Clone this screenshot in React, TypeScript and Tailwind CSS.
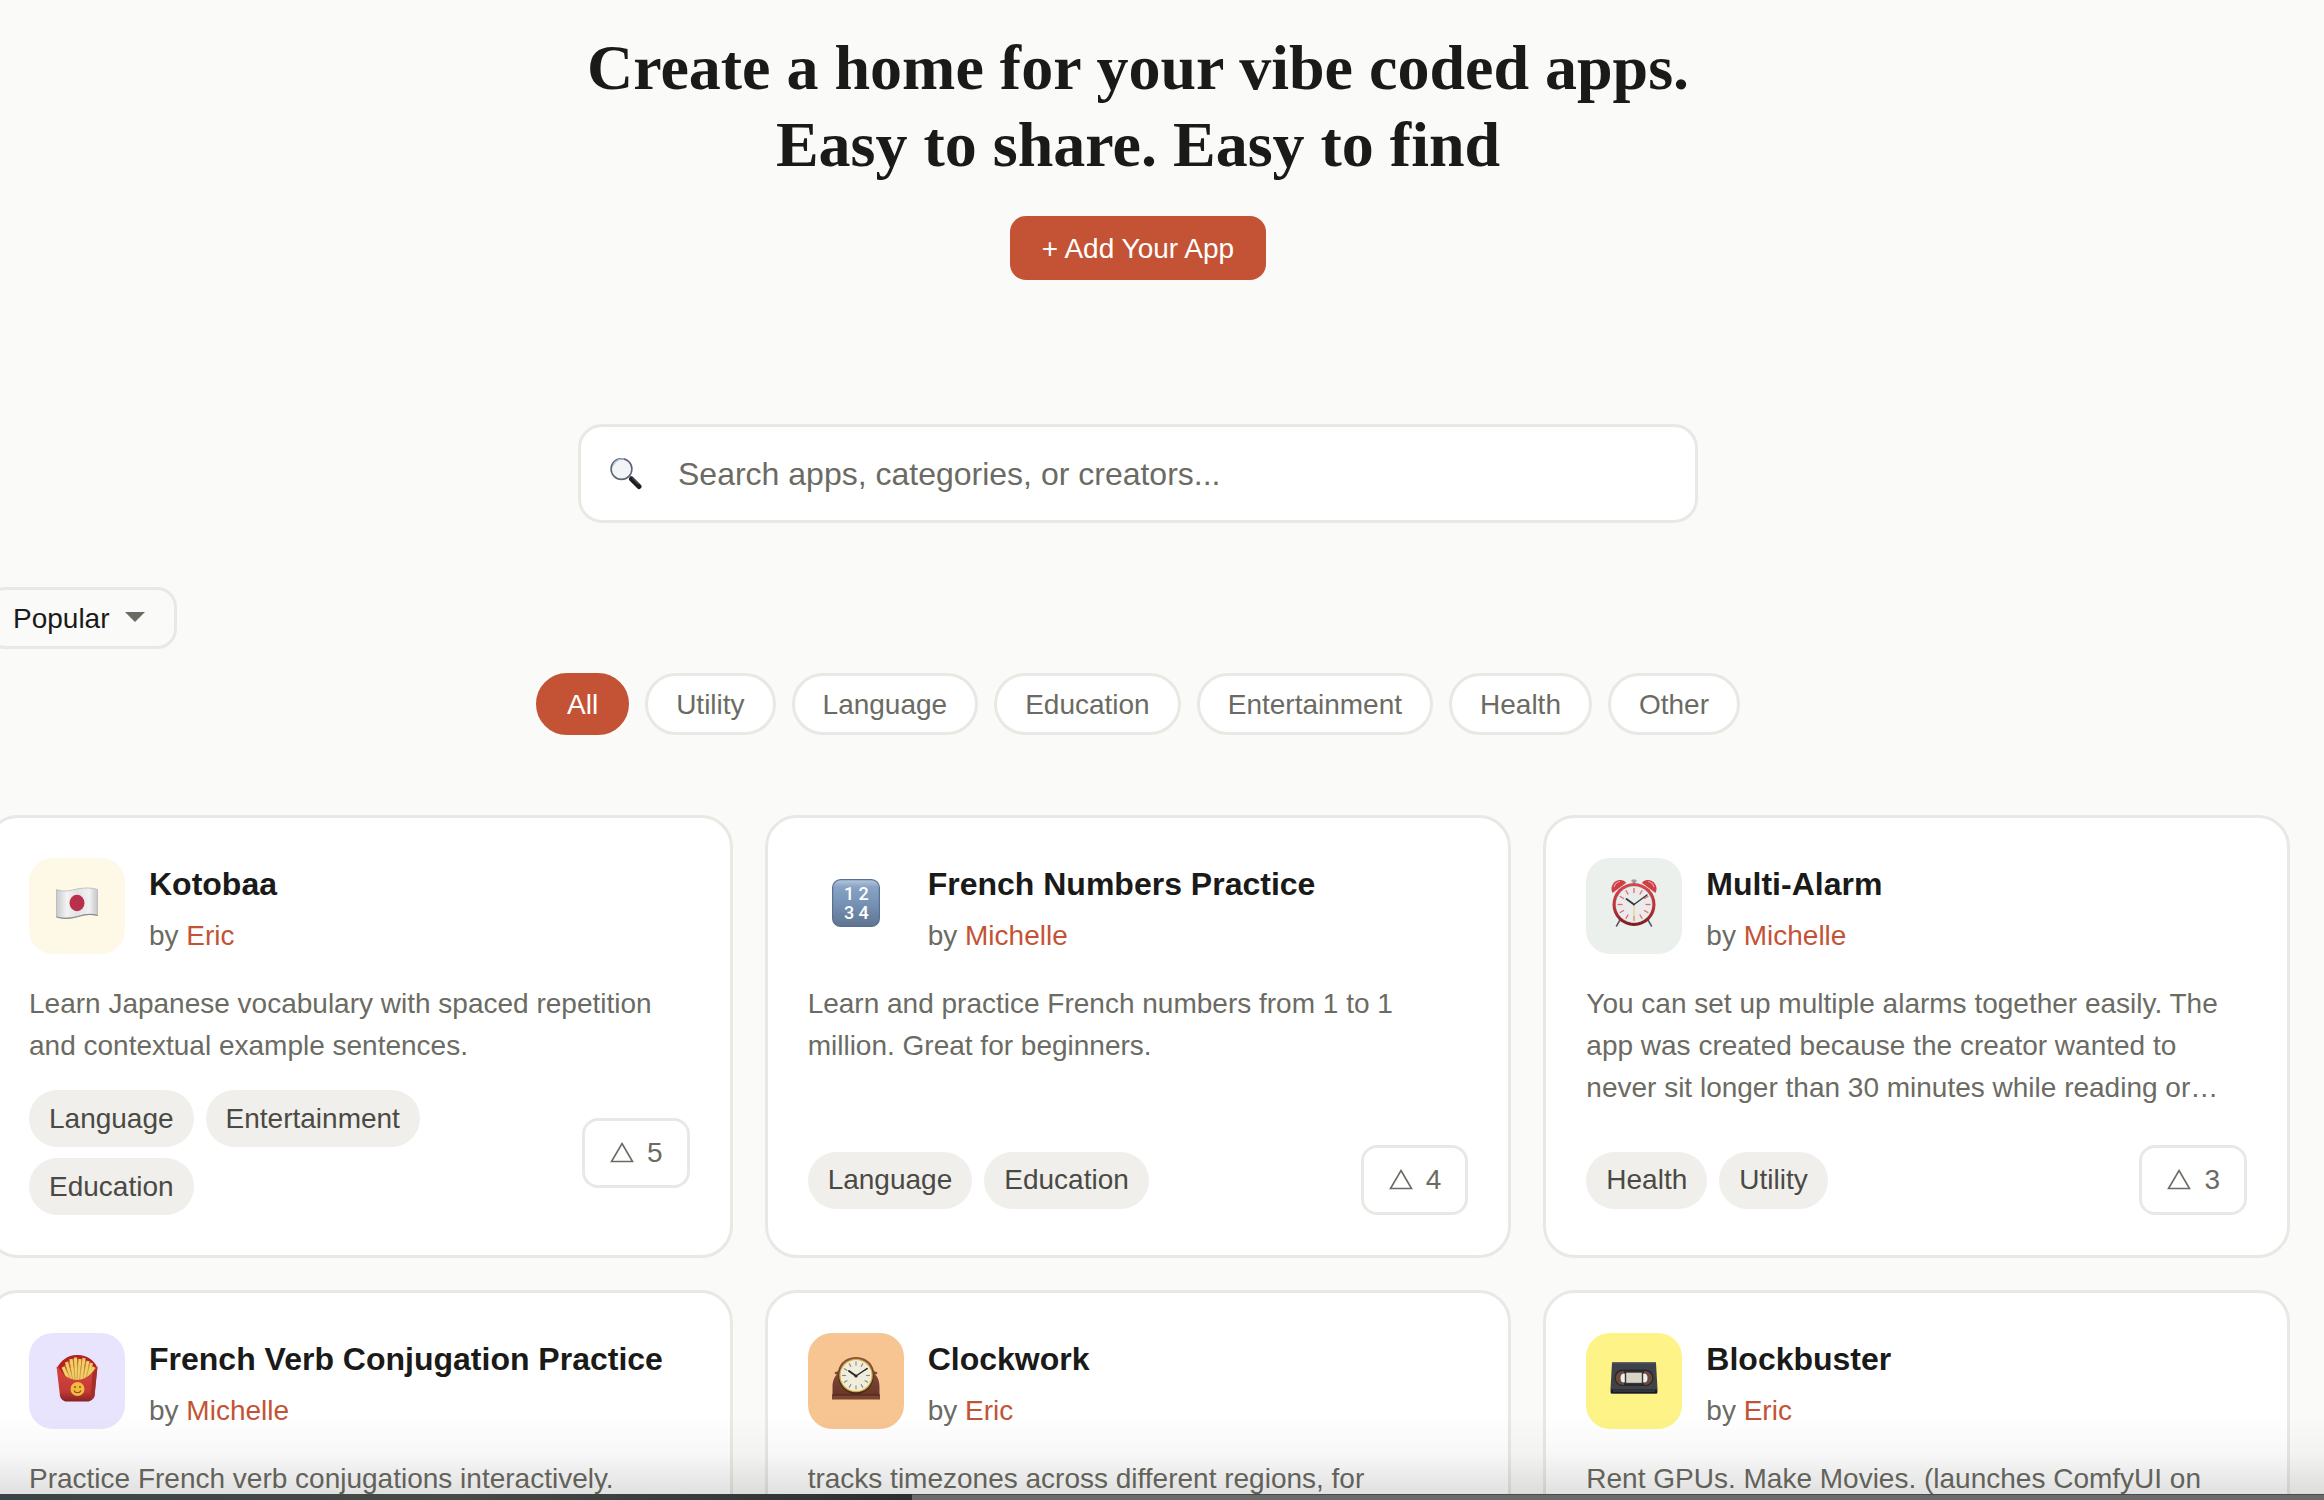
import { useState, type ReactNode } from "react";

type AppEntry = {
  name: string;
  creator: string;
  description: string;
  icon: ReactNode;
  iconBg: string;
  tags: string[];
  votes: number;
};

const categories = [
  "All",
  "Utility",
  "Language",
  "Education",
  "Entertainment",
  "Health",
  "Other",
];

const clockTicks = [0, 30, 60, 90, 120, 150, 180, 210, 240, 270, 300, 330];

function FlagIcon() {
  return (
    <svg viewBox="0 0 48 48" className="size-12" aria-hidden="true">
      <defs>
        <linearGradient id="flag" x1="0" x2="1" y1="0" y2="0">
          <stop offset="0" stopColor="#c9c9cc" />
          <stop offset="0.25" stopColor="#f3f3f4" />
          <stop offset="0.5" stopColor="#e2e2e4" />
          <stop offset="0.8" stopColor="#f1f1f2" />
          <stop offset="1" stopColor="#c6c6ca" />
        </linearGradient>
      </defs>
      <path
        d="M3.5 10.5C10 13 16 12 22 10.500C30 8.500 38 8.500 44.500 10.500V36.500C38 34.500 31 35.500 25 37.500C18 39.500 10 40 3.500 38Z"
        fill="url(#flag)"
        stroke="#b5b5b9"
        strokeWidth="0.8"
      />
      <path d="M3.500 38C10 40 18 39.500 25 37.500C31 35.500 38 34.500 44.500 36.500" fill="none" stroke="#8b8b90" strokeWidth="1.200" />
      <ellipse cx="24" cy="24" rx="7.500" ry="8.300" fill="#b9304b" />
    </svg>
  );
}

function NumbersIcon() {
  return (
    <svg viewBox="0 0 48 48" className="size-12" aria-hidden="true">
      <defs>
        <linearGradient id="numbers" x1="0" x2="0" y1="0" y2="1">
          <stop offset="0" stopColor="#b4c8dd" />
          <stop offset="0.16" stopColor="#88a3c3" />
          <stop offset="0.55" stopColor="#7390b3" />
          <stop offset="1" stopColor="#61748f" />
        </linearGradient>
      </defs>
      <rect x="0.600" y="0.600" width="46.800" height="46.800" rx="8" fill="url(#numbers)" stroke="#5a7090" strokeWidth="1.200" />
      <g fill="#fff" fontFamily="Roboto, sans-serif" fontSize="18" fontWeight="500" textAnchor="middle">
        <text x="17" y="21">1</text>
        <text x="31.500" y="21">2</text>
        <text x="17" y="40">3</text>
        <text x="31.500" y="40">4</text>
      </g>
    </svg>
  );
}

function AlarmIcon() {
  return (
    <svg viewBox="0 0 48 48" className="size-12" aria-hidden="true">
      <defs>
        <linearGradient id="alarm" x1="0" x2="0" y1="0" y2="1">
          <stop offset="0" stopColor="#d9484d" />
          <stop offset="0.6" stopColor="#b93035" />
          <stop offset="1" stopColor="#7d1a1e" />
        </linearGradient>
      </defs>
      <path d="M10 41L6.500 47M38 41L41.500 47" stroke="#59616b" strokeWidth="1.600" strokeLinecap="round" />
      <rect x="21.500" y="0.500" width="5" height="3" rx="1" fill="#9aa0a6" />
      <path d="M23 3h2v3h-2z" fill="#8a8f95" />
      <path d="M2.500 14C-1 7 5 0 11 1C14 1.500 16 3 16 4Z" fill="#cf4046" />
      <path d="M45.500 14C49 7 43 0 37 1C34 1.500 32 3 32 4Z" fill="#cf4046" />
      <path d="M4 8C5 5 7 3 10 2.500" stroke="#eea0a2" strokeWidth="1.200" fill="none" />
      <path d="M38 2.500C41 3 43 5 44 8" stroke="#eea0a2" strokeWidth="1.200" fill="none" />
      <circle cx="24" cy="25.500" r="21.500" fill="url(#alarm)" />
      <circle cx="24" cy="25.500" r="18.500" fill="#a9bcc0" />
      <circle cx="24" cy="25.500" r="18" fill="#ebebeb" />
      {clockTicks.map((angle) => (
        <path key={angle} d="M24 9v5" stroke="#e0686b" strokeWidth="1.300" transform={`rotate(${angle} 24 25.500)`} />
      ))}
      <path d="M24 25.500V42" stroke="#e3c47c" strokeWidth="1" />
      <path d="M24 25.500L16.500 20" stroke="#34383d" strokeWidth="1.800" strokeLinecap="round" />
      <path d="M24 25.500L37 16" stroke="#34383d" strokeWidth="1.400" strokeLinecap="round" />
    </svg>
  );
}

function FriesIcon() {
  return (
    <svg viewBox="0 0 48 48" className="size-12" aria-hidden="true">
      <defs>
        <linearGradient id="fries" x1="0" x2="0" y1="0" y2="1">
          <stop offset="0" stopColor="#d8453f" />
          <stop offset="0.7" stopColor="#c23a35" />
          <stop offset="1" stopColor="#862322" />
        </linearGradient>
      </defs>
      <path d="M4 14C8 6 16 0.500 24 1C33 0.500 41 6 44 13L38 26H12Z" fill="#b5211f" />
      <g stroke="#f1cf68" strokeWidth="3.200" strokeLinecap="butt">
        <path d="M10 13L15 24M13.500 8L18 25M18 5L21 26M22.500 3.500L23 27M27 5L25 27M31 4L28 27M35 7L31 26M38.500 9L34 24M41 13L37 22" />
      </g>
      <g stroke="#c8933a" strokeWidth="0.800">
        <path d="M12 11L17 24M16 7L19.500 25M20.500 5L22 26M25 5L24 27M29 5.500L26.500 27M33 6L30 26M37 9L33 24" />
      </g>
      <path d="M3.500 12.500C7 13 10 25.500 24 26C38 25.500 41 13.500 44.500 12.500L41.500 42C41 45 37 47.500 35 47.500H13C11 47.500 7.500 45 7 42Z" fill="url(#fries)" />
      <path d="M39.500 19L44.500 12.500L41.500 42C41 44 39 46 37.500 46.500Z" fill="#a52f2c" />
      <circle cx="24.500" cy="35" r="7" fill="#f2bb40" />
      <path d="M21 36.500C22.500 39.500 26.500 39.500 28 36.500" fill="none" stroke="#8a4a13" strokeWidth="1.200" />
      <path d="M22 32v2M27 32v2" stroke="#8a4a13" strokeWidth="1.400" />
    </svg>
  );
}

function MantelClockIcon() {
  return (
    <svg viewBox="0 0 48 48" className="size-12" aria-hidden="true">
      <defs>
        <linearGradient id="mantel" x1="0" x2="0" y1="0" y2="1">
          <stop offset="0" stopColor="#8b5240" />
          <stop offset="1" stopColor="#683628" />
        </linearGradient>
      </defs>
      <path d="M4 18C2 18 2 20 5 20.500C2 23 0.500 28 0.500 33V42H47.500V33C47.500 28 46 23 43 20.500C46 20 46 18 44 18L42 17C40 8 33 3 24 3C15 3 8 8 6 17Z" fill="url(#mantel)" />
      <rect x="0" y="41" width="48" height="4.500" rx="0.500" fill="#7b4534" />
      <path d="M0 41h48" stroke="#3f1d14" strokeWidth="0.800" />
      <circle cx="24" cy="22.500" r="17.500" fill="#4c261a" />
      <circle cx="24" cy="21.500" r="16.800" fill="#cdae3c" />
      <circle cx="24" cy="21.500" r="15.500" fill="#f1eddc" />
      {clockTicks.map((angle) => (
        <path key={angle} d="M24 7.500v4" stroke="#8b8778" strokeWidth="1.100" transform={`rotate(${angle} 24 21.500)`} />
      ))}
      <path d="M24 22L17 17" stroke="#26262a" strokeWidth="2" strokeLinecap="round" />
      <path d="M24 22L35 14.500" stroke="#26262a" strokeWidth="1.500" strokeLinecap="round" />
      <circle cx="24" cy="22" r="1.600" fill="#26262a" />
    </svg>
  );
}

function CassetteIcon() {
  return (
    <svg viewBox="0 0 48 48" className="size-12" aria-hidden="true">
      <path d="M2 9C2 8.500 2.500 8 3 8H45C45.500 8 46 8.500 46 9L47.500 35V38C47.500 39 47 39.500 46 39.500H2C1 39.500 0.500 39 0.500 38V35Z" fill="#3f4349" />
      <path d="M2.500 8.700h43" stroke="#6a6f76" strokeWidth="1" />
      <path d="M1 35.500H47V38C47 39 46.500 39.500 46 39.500H2C1.500 39.500 1 39 1 38Z" fill="#1b1d21" />
      <path d="M3 37h42" stroke="#565a60" strokeWidth="0.800" />
      <rect x="4.500" y="15.500" width="39" height="16.500" rx="8" fill="#26282c" />
      <path d="M14 17C3 17 3 31 14 31Z" fill="#6e4a3c" />
      <path d="M34 17C45 17 45 31 34 31Z" fill="#6e4a3c" />
      <ellipse cx="14" cy="24" rx="3.500" ry="4.500" fill="#f0eee8" />
      <ellipse cx="34" cy="24" rx="3.500" ry="4.500" fill="#f0eee8" />
      <rect x="15.500" y="18" width="17" height="11.500" fill="#d8d5c6" stroke="#33363b" strokeWidth="1.400" />
    </svg>
  );
}

function SearchIcon() {
  return (
    <svg viewBox="0 0 32 32" className="size-8" aria-hidden="true">
      <path d="M18.500 17L22 20.500" stroke="#9aa0a6" strokeWidth="2" />
      <path d="M21.500 21L29 28.500" stroke="#1c1e22" strokeWidth="5" strokeLinecap="round" />
      <path d="M22.500 20L28.500 26" stroke="#6d7278" strokeWidth="0.900" strokeLinecap="round" />
      <circle cx="11.500" cy="11" r="10.400" fill="#f3f4f5" stroke="#5c6875" strokeWidth="1.600" />
      <path d="M3 7.500C5 2.500 10 0.300 14 1" fill="none" stroke="#a9c0dc" strokeWidth="1.400" />
    </svg>
  );
}

const apps: AppEntry[] = [
  {
    name: "Kotobaa",
    creator: "Eric",
    description:
      "Learn Japanese vocabulary with spaced repetition and contextual example sentences.",
    icon: <FlagIcon />,
    iconBg: "bg-[#fef8e6]",
    tags: ["Language", "Entertainment", "Education"],
    votes: 5,
  },
  {
    name: "French Numbers Practice",
    creator: "Michelle",
    description:
      "Learn and practice French numbers from 1 to 1 million. Great for beginners.",
    icon: <NumbersIcon />,
    iconBg: "bg-white",
    tags: ["Language", "Education"],
    votes: 4,
  },
  {
    name: "Multi-Alarm",
    creator: "Michelle",
    description:
      "You can set up multiple alarms together easily. The app was created because the creator wanted to never sit longer than 30 minutes while reading or…",
    icon: <AlarmIcon />,
    iconBg: "bg-[#ebf0ed]",
    tags: ["Health", "Utility"],
    votes: 3,
  },
  {
    name: "French Verb Conjugation Practice",
    creator: "Michelle",
    description: "Practice French verb conjugations interactively.",
    icon: <FriesIcon />,
    iconBg: "bg-[#e9e4fd]",
    tags: [],
    votes: 0,
  },
  {
    name: "Clockwork",
    creator: "Eric",
    description: "tracks timezones across different regions, for",
    icon: <MantelClockIcon />,
    iconBg: "bg-[#f6c592]",
    tags: [],
    votes: 0,
  },
  {
    name: "Blockbuster",
    creator: "Eric",
    description: "Rent GPUs. Make Movies. (launches ComfyUI on",
    icon: <CassetteIcon />,
    iconBg: "bg-[#fdf387]",
    tags: [],
    votes: 0,
  },
];

function AppCard({ app }: { app: AppEntry }) {
  return (
    <article className="flex flex-col rounded-[32px] border-3 border-[#e8e8e4] bg-white p-10">
      <div className="mb-[25px] flex items-start gap-6">
        <div
          className={`flex size-24 shrink-0 items-center justify-center rounded-3xl pb-1.5 ${app.iconBg}`}
        >
          {app.icon}
        </div>
        <div>
          <h2 className="text-[32px] leading-[53px] font-bold text-[#1a1a18]">{app.name}</h2>
          <p className="mt-0.5 leading-[45px]">
            by{" "}
            <a href="#" className="text-[#c45335] hover:underline">
              {app.creator}
            </a>
          </p>
        </div>
      </div>

      <p className="mb-[23px] leading-[42px]">{app.description}</p>

      {app.tags.length > 0 && (
        <div className="mt-auto flex items-center justify-between gap-6">
          <ul className="flex flex-wrap gap-x-3 gap-y-[11px]">
            {app.tags.map((tag) => (
              <li
                key={tag}
                className="flex h-[57px] items-center rounded-full bg-[#f0efeb] px-5 text-[#4a4a45]"
              >
                {tag}
              </li>
            ))}
          </ul>
          <button
            type="button"
            aria-label={`Upvote ${app.name}`}
            className="flex h-[70px] shrink-0 items-center gap-3 rounded-2xl border-3 border-[#e8e8e4] bg-white px-6 hover:border-[#c45335]"
          >
            <svg viewBox="0 0 26 24" className="h-6 w-[26px]" aria-hidden="true">
              <path d="M13 2.500L23.500 20.500H2.500Z" fill="none" stroke="currentColor" strokeWidth="1.600" />
            </svg>
            {app.votes}
          </button>
        </div>
      )}
    </article>
  );
}

export default function App() {
  const [category, setCategory] = useState("All");
  const [query, setQuery] = useState("");

  return (
    <div className="relative h-screen overflow-hidden bg-[#fafaf8] font-['Liberation_Sans',Arial,sans-serif] text-[28px] text-[#6b6b63]">
      <main className="-ml-[14px] mr-[34px] flex flex-col">
        {/* Hero */}
        <section className="flex flex-col items-center pt-[29px]">
          <h1 className="text-center font-['Liberation_Serif','Times_New_Roman',serif] text-[64px] leading-[77px] font-bold text-[#1a1a18]">
            Create a home for your vibe coded apps.
            <br />
            Easy to share. Easy to find
          </h1>
          <button
            type="button"
            className="mt-[33px] h-16 rounded-2xl bg-[#c45335] px-8 pt-0.5 text-white transition-colors hover:bg-[#a8442a]"
          >
            + Add Your App
          </button>
        </section>

        {/* Search */}
        <label className="mx-auto mt-36 flex h-[99px] w-full max-w-[1120px] items-center gap-9 rounded-3xl border-3 border-[#e8e8e4] bg-white px-[29px]">
          <SearchIcon />
          <input
            type="text"
            aria-label="Search apps"
            value={query}
            onChange={(e) => setQuery(e.target.value)}
            placeholder="Search apps, categories, or creators..."
            className="min-w-0 flex-1 bg-transparent text-[32px] outline-none placeholder:text-[#6b6b63]"
          />
        </label>

        {/* Sort */}
        <div className="relative mt-16 self-start">
          <select
            aria-label="Sort by"
            className="h-[62px] w-[191px] appearance-none rounded-[20px] border-3 border-[#e8e8e4] bg-transparent pt-0.5 pl-6 text-[#1a1a18] outline-none"
          >
            <option>Popular</option>
            <option>Newest</option>
          </select>
          <svg
            viewBox="0 0 20 10"
            className="pointer-events-none absolute top-[25px] right-8 h-2.5 w-5"
            aria-hidden="true"
          >
            <path d="M0 0H20L10 10Z" fill="#6b6b63" />
          </svg>
        </div>

        {/* Categories */}
        <div className="mt-6 flex flex-wrap justify-center gap-4">
          {categories.map((name) => (
            <button
              key={name}
              type="button"
              onClick={() => setCategory(name)}
              className={`h-[62px] rounded-full border-3 px-7 pt-0.5 ${
                category === name
                  ? "border-[#c45335] bg-[#c45335] text-white"
                  : "border-[#e8e8e4] bg-white"
              }`}
            >
              {name}
            </button>
          ))}
        </div>

        {/* App grid */}
        <section className="mt-20 grid grid-cols-3 gap-8">
          {apps.map((app) => (
            <AppCard key={app.name} app={app} />
          ))}
        </section>
      </main>

      {/* Window edge */}
      <div className="pointer-events-none absolute inset-x-0 bottom-0">
        <div className="h-20 bg-linear-to-b from-transparent via-black/3 to-black/12" />
        <div className="flex h-1.5">
          <div className="w-[912px] bg-linear-to-r from-[#3b4446] via-[#474a46] to-[#2c2e30]" />
          <div className="flex-1 border-t border-[#4a4a4a] bg-[#6a6a6a]" />
        </div>
      </div>
    </div>
  );
}
